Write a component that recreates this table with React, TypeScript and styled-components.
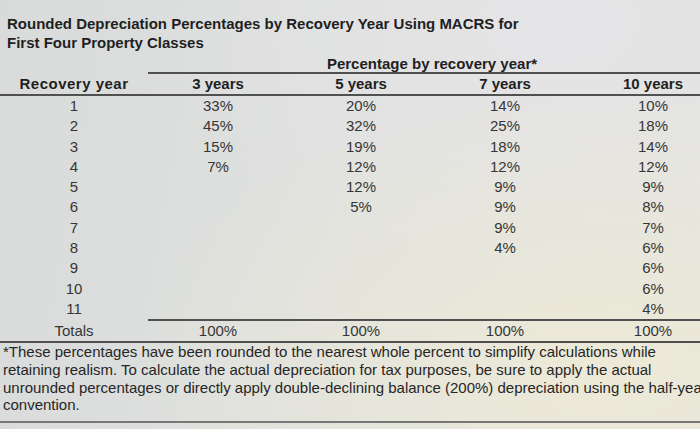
import React from 'react';
import styled, { createGlobalStyle } from 'styled-components';

const GlobalStyle = createGlobalStyle`
  html, body {
    margin: 0;
    padding: 0;
  }
  body {
    font-family: "Liberation Sans", Arial, sans-serif;
    background: #dfe1df;
  }
`;

const Page = styled.div`
  width: 700px;
  height: 429px;
  overflow: hidden;
  background:
    radial-gradient(ellipse at 85% 85%, rgba(238, 234, 214, 0.9) 0%, rgba(238, 234, 214, 0) 55%),
    radial-gradient(ellipse at 80% 5%, rgba(230, 228, 232, 0.8) 0%, rgba(230, 228, 232, 0) 50%),
    linear-gradient(100deg, #d8dbda 0%, #dfe1df 45%, #e3e4e0 100%);
  color: #2b2b2b;
`;

const Title = styled.h1`
  margin: 0;
  padding: 14px 0 0 7px;
  font-size: 15px;
  line-height: 19px;
  font-weight: bold;
  color: #1f1f1f;
`;

const cols = '148px 140px 146px 142px 124px';

const SuperHead = styled.div`
  margin: 3px 0 0 148px;
  height: 17px;
  padding-left: 16px;
  text-align: center;
  font-size: 15px;
  line-height: 18px;
  font-weight: bold;
  color: #1f1f1f;
  border-bottom: 2px solid #505050;
`;

const Row = styled.div<{ $h: number; $bold?: boolean }>`
  display: grid;
  grid-template-columns: ${cols};
  height: ${(p) => p.$h}px;
  line-height: ${(p) => p.$h}px;
  font-size: 15px;
  font-weight: ${(p) => (p.$bold ? 'bold' : 'normal')};
  color: ${(p) => (p.$bold ? '#1f1f1f' : '#363636')};
  white-space: nowrap;
`;

const Cell = styled.div<{ $last?: boolean; $wide?: boolean }>`
  text-align: center;
  padding-left: ${(p) => (p.$last ? '30px' : '0')};
  letter-spacing: ${(p) => (p.$wide ? '0.5px' : 'normal')};
`;

const Rule = styled.div<{ $inset?: boolean }>`
  height: 2px;
  margin-left: ${(p) => (p.$inset ? '148px' : '0')};
  background: #505050;
`;

const Note = styled.p`
  margin: 0;
  padding-left: 3px;
  font-size: 15px;
  line-height: 17.7px;
  color: #262626;
  white-space: nowrap;
`;

const BottomRule = styled(Rule)`
  margin-top: 7px;
  background: #777;
`;

const data: string[][] = [
  ['1', '33%', '20%', '14%', '10%'],
  ['2', '45%', '32%', '25%', '18%'],
  ['3', '15%', '19%', '18%', '14%'],
  ['4', '7%', '12%', '12%', '12%'],
  ['5', '', '12%', '9%', '9%'],
  ['6', '', '5%', '9%', '8%'],
  ['7', '', '', '9%', '7%'],
  ['8', '', '', '4%', '6%'],
  ['9', '', '', '', '6%'],
  ['10', '', '', '', '6%'],
  ['11', '', '', '', '4%'],
];

const Line = ({ cells, h, bold }: { cells: string[]; h: number; bold?: boolean }) => (
  <Row $h={h} $bold={bold}>
    {cells.map((c, i) => (
      <Cell key={i} $last={i === 4} $wide={bold && i === 0}>
        {c}
      </Cell>
    ))}
  </Row>
);

export default function App() {
  return (
    <Page>
      <GlobalStyle />
      <Title>
        Rounded Depreciation Percentages by Recovery Year Using MACRS for
        <br />
        First Four Property Classes
      </Title>
      <SuperHead>Percentage by recovery year*</SuperHead>
      <Line cells={['Recovery year', '3 years', '5 years', '7 years', '10 years']} h={20} bold />
      <Rule />
      {data.map((r) => (
        <Line key={r[0]} cells={r} h={20.3} />
      ))}
      <Rule $inset />
      <Line cells={['Totals', '100%', '100%', '100%', '100%']} h={20} />
      <Rule />
      <Note>
        *These percentages have been rounded to the nearest whole percent to simplify calculations while
        <br />
        retaining realism. To calculate the actual depreciation for tax purposes, be sure to apply the actual
        <br />
        unrounded percentages or directly apply double-declining balance (200%) depreciation using the half-year
        <br />
        convention.
      </Note>
      <BottomRule />
    </Page>
  );
}
